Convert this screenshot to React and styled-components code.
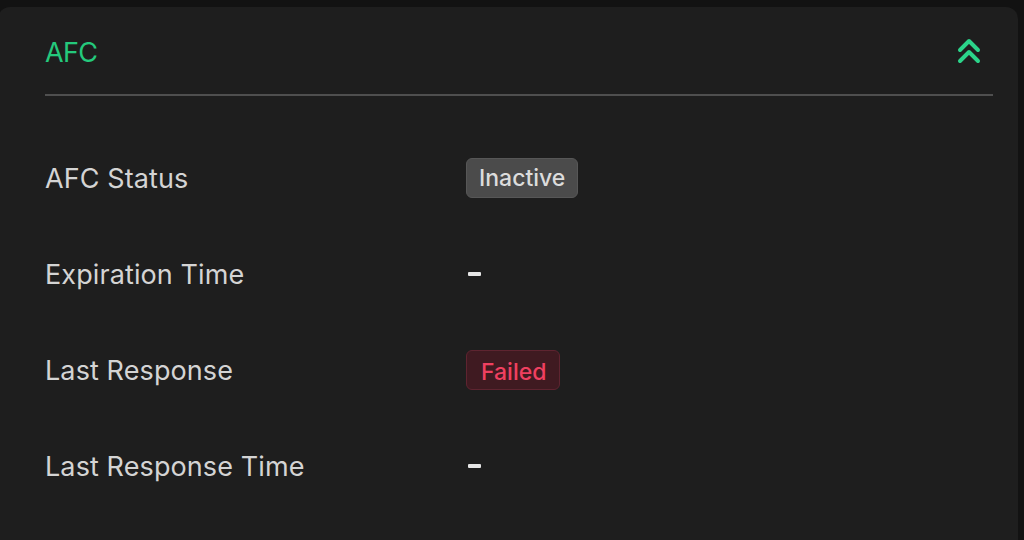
import React from "react";
import styled, { createGlobalStyle } from "styled-components";

const Global = createGlobalStyle`
  html, body { margin: 0; padding: 0; background: #121212; }
  body { font-family: Inter, "Noto Sans", sans-serif; overflow: hidden; }
`;

const Page = styled.div`
  width: 1024px;
  height: 540px;
  padding-top: 7px;
  box-sizing: border-box;
`;

const Card = styled.section`
  width: 1020px;
  height: 560px;
  margin-left: -2px;
  background: #1e1e1e;
  border-radius: 12px;
  padding: 0 25px 0 47px;
  box-sizing: border-box;
`;

const Header = styled.header`
  display: flex;
  align-items: center;
  justify-content: space-between;
  height: 87px;
  border-bottom: 2px solid #4f4f4f;
  padding-right: 11px;
`;

const Title = styled.h2`
  margin: 0;
  padding-top: 4px;
  font-family: Inter, sans-serif;
  font-weight: 400;
  font-size: 27px;
  letter-spacing: -0.6px;
  color: #24c97c;
`;

const Toggle = styled.button`
  background: none;
  border: none;
  padding: 0;
  display: flex;
  color: #2bd48a;
  cursor: pointer;
`;

const Rows = styled.div`
  display: flex;
  flex-direction: column;
  padding-top: 62px;
`;

const Row = styled.div`
  display: grid;
  grid-template-columns: 421px 1fr;
  align-items: center;
  height: 40px;
  margin-bottom: 56px;
`;

const Label = styled.span`
  font-family: Inter, sans-serif;
  font-size: 27px;
  font-weight: 400;
  letter-spacing: 0.1px;
  color: #d4d4d4;
`;

const Badge = styled.span`
  justify-self: start;
  display: inline-flex;
  align-items: center;
  height: 40px;
  padding: 0 12px;
  box-sizing: border-box;
  border-radius: 6px;
  font-family: Inter, sans-serif;
  font-size: 23px;
  font-weight: 500;
  background: ${(p) => (p.$tone === "danger" ? "#3f1a21" : "#4b4b4b")};
  border: 1px solid ${(p) => (p.$tone === "danger" ? "#5e2430" : "#575757")};
  color: ${(p) => (p.$tone === "danger" ? "#ef4060" : "#dcdcdc")};
  padding-top: ${(p) => (p.$tone === "danger" ? "3px" : "0")};
  padding-left: ${(p) => (p.$tone === "danger" ? "14px" : "12px")};
  padding-right: ${(p) => (p.$tone === "danger" ? "13px" : "12px")};
`;

const Dash = styled.span`
  justify-self: start;
  display: block;
  width: 13px;
  height: 4px;
  margin-left: 2px;
  background: #e6e6e6;
  border-radius: 1px;
`;

const ChevronsUp = () => (
  <svg width="26" height="28" viewBox="0 0 26 28" fill="none" stroke="currentColor" strokeWidth="4" strokeLinecap="round" strokeLinejoin="round">
    <polyline points="4,13 13,4 22,13" />
    <polyline points="4,24 13,15 22,24" />
  </svg>
);

const rows = [
  { label: "AFC Status", value: { kind: "badge", text: "Inactive" } },
  { label: "Expiration Time", value: { kind: "dash" } },
  { label: "Last Response", value: { kind: "badge", text: "Failed", tone: "danger" } },
  { label: "Last Response Time", value: { kind: "dash" } },
];

export default function App() {
  return (
    <Page>
      <Global />
      <Card>
        <Header>
          <Title>AFC</Title>
          <Toggle aria-label="Collapse">
            <ChevronsUp />
          </Toggle>
        </Header>
        <Rows>
          {rows.map((r) => (
            <Row key={r.label}>
              <Label>{r.label}</Label>
              {r.value.kind === "badge" ? (
                <Badge $tone={r.value.tone}>{r.value.text}</Badge>
              ) : (
                <Dash aria-label="-" />
              )}
            </Row>
          ))}
        </Rows>
      </Card>
    </Page>
  );
}
